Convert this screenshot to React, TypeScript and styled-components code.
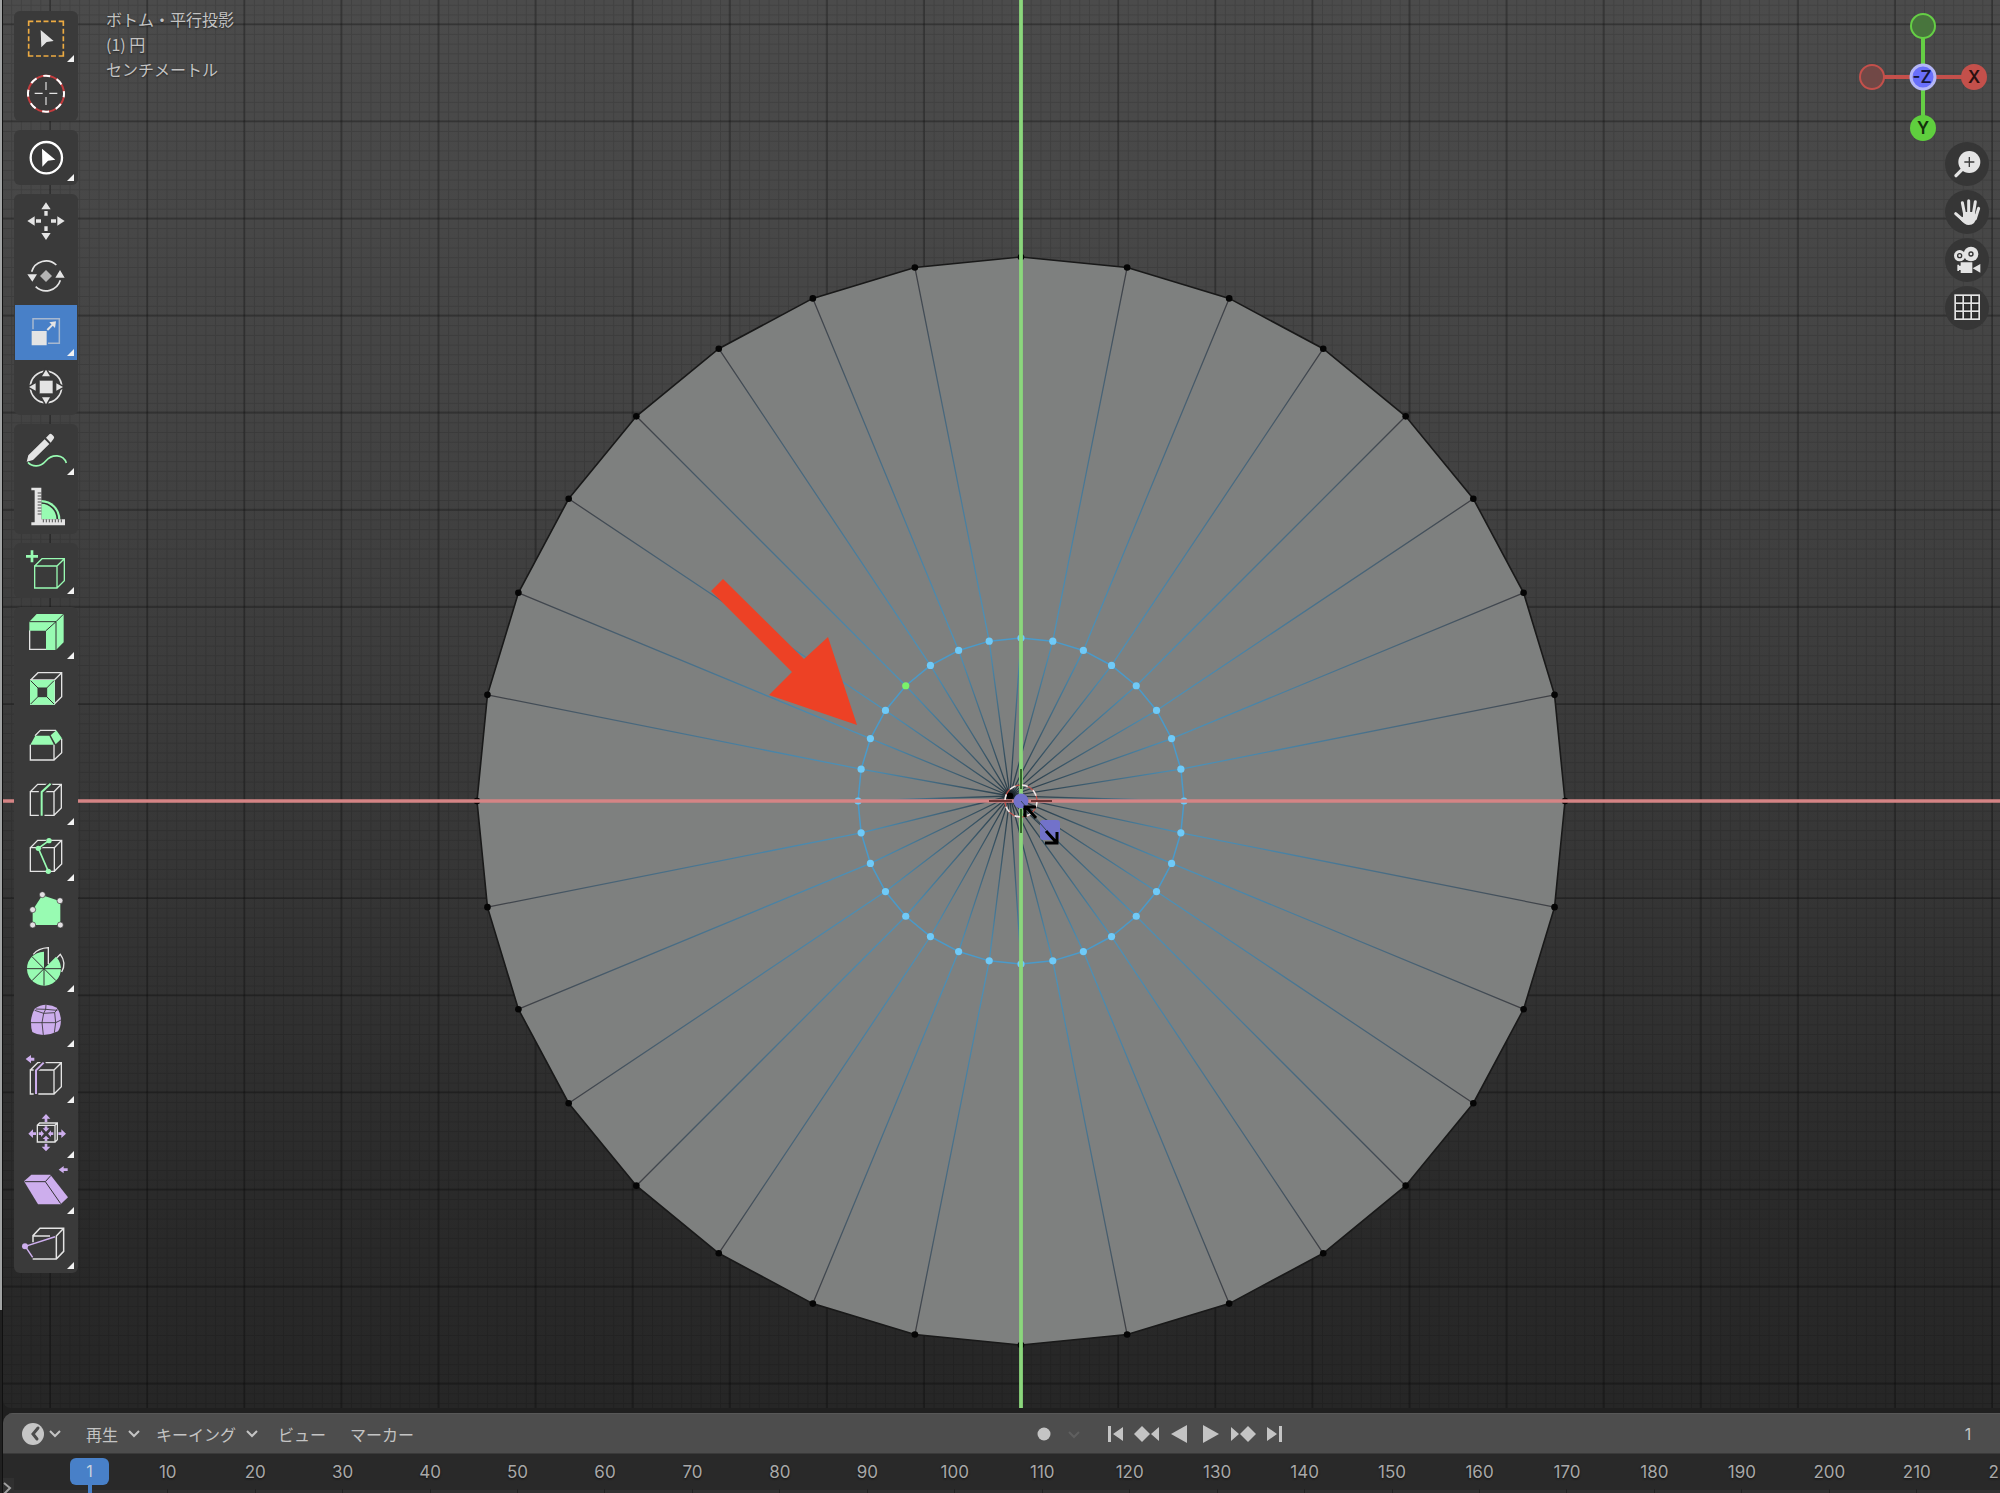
import React from "react";
import styled, { createGlobalStyle } from "styled-components";

const Global = createGlobalStyle`
  *, *::before, *::after { box-sizing: border-box; }
  html, body { margin: 0; background: #1f1f1f; }
  body { font-family: Inter, "Noto Sans CJK JP", sans-serif; color: #c4c4c4; }
  button { font: inherit; color: inherit; background: none; border: 0; padding: 0; margin: 0; }
`;

const Shell = styled.div`
  display: flex;
  height: 100vh;
  overflow: hidden;
`;

const Edge = styled.div`
  display: flex;
  flex-direction: column;
  width: 3px;
  padding-bottom: 183px;
  border-right: 1px solid #101010;
  background: #202020;
`;

const EdgeLight = styled.div`
  flex: 1;
  background: #a2a4a4;
`;

const Main = styled.main`
  flex: 1;
  min-width: 0;
  display: flex;
  flex-direction: column;
  gap: 5px;
`;

const Viewport = styled.section`
  position: relative;
  flex: 1;
  min-height: 0;
  display: flex;
  padding: 11px 11px 0;
  overflow: hidden;
  border-radius: 0 0 0 8px;
  background: linear-gradient(#4b4b4b, #444444 28%, #383838 57%, #2a2a2a 85%, #262626);
`;

const Scene = styled.svg`
  position: absolute;
  inset: 0;
  width: 100%;
  height: 100%;
`;

const Toolbar = styled.div`
  position: relative;
  display: flex;
  flex-direction: column;
  gap: 9px;
  width: 64px;
`;

const ToolGroup = styled.div<{ $height: number }>`
  display: flex;
  flex-direction: column;
  height: ${(p) => p.$height}px;
  border-radius: 6px;
  overflow: hidden;
  background: #3a3a3a;
`;

const ToolButton = styled.button<{ $active?: boolean; $menu?: boolean }>`
  position: relative;
  flex: 1;
  min-height: 0;
  display: flex;
  align-items: center;
  justify-content: center;
  margin: 0 1px;
  background: ${(p) => (p.$active ? "#4880c8" : "transparent")};
  svg { width: 44px; height: 44px; overflow: visible; }
  &::after {
    content: "";
    display: ${(p) => (p.$menu ? "block" : "none")};
    position: absolute;
    right: 3px;
    bottom: 4px;
    border-left: 7px solid transparent;
    border-bottom: 7px solid #f2f2f2;
  }
`;

const Info = styled.div`
  position: relative;
  flex: 1;
  margin: -4px 0 0 28px;
  font-family: "Noto Sans CJK JP", sans-serif;
  font-size: 16px;
  line-height: 25px;
  color: #c3c3c3;
  text-shadow: 0 1px 2px rgba(0, 0, 0, 0.5);
  p { margin: 0; }
`;

const Navigation = styled.div`
  position: relative;
  display: flex;
  flex-direction: column;
  align-items: flex-end;
  gap: 4px;
  padding-top: 1px;
`;

const Gizmo = styled.svg`
  width: 132px;
  height: 126px;
  overflow: visible;
  text { font: 600 17px Inter, sans-serif; text-anchor: middle; }
`;

const NavButton = styled.button`
  width: 44px;
  height: 44px;
  border-radius: 50%;
  background: #363636;
  svg { display: block; width: 44px; height: 44px; }
`;

const Timeline = styled.section`
  display: flex;
  flex-direction: column;
  border-radius: 10px 0 0 0;
  overflow: hidden;
  background: #292929;
`;

const TimelineBar = styled.header`
  display: grid;
  grid-template-columns: 13fr auto 9fr;
  align-items: center;
  height: 40px;
  background: #4d4d4d;
  border-top: 1px solid #575757;
  font-family: "Noto Sans CJK JP", sans-serif;
  font-size: 16px;
  line-height: 24px;
  svg { display: block; }
`;

const Menus = styled.nav`
  display: flex;
  align-items: center;
  padding-left: 19px;
  gap: 20px;
  min-width: 0;
`;

const MenuSet = styled.div<{ $gap: number }>`
  display: flex;
  gap: ${(p) => p.$gap}px;
`;

const MenuButton = styled.button`
  display: flex;
  align-items: center;
  gap: 10px;
  white-space: nowrap;
`;

const EditorButton = styled(MenuButton)`
  gap: 5px;
  margin-right: 5px;
`;

const Playback = styled.div`
  display: flex;
  align-items: center;
`;

const PlayButton = styled.button<{ $after?: number; $dim?: boolean }>`
  width: 32px;
  height: 32px;
  margin-right: ${(p) => p.$after ?? 0}px;
  color: ${(p) => (p.$dim ? "#5f5f5f" : "#c4c4c4")};
  svg { width: 32px; height: 32px; }
`;

const FrameField = styled.input`
  justify-self: end;
  width: 40px;
  margin-right: 12px;
  padding: 0;
  border: 0;
  outline: 0;
  background: none;
  color: #c4c4c4;
  font: 16px/24px Inter, sans-serif;
  text-align: center;
`;

const Ruler = styled.div`
  display: flex;
  height: 40px;
  border-top: 1px solid #3a3a3a;
  background: linear-gradient(#292929 36px, #313131 36px);
  overflow: hidden;
`;

const RulerStart = styled.div`
  flex: 0 0 121px;
  display: flex;
`;

const Expand = styled.button`
  width: 11px;
  height: 16px;
  margin-top: 24px;
  background: #303030;
  svg { display: block; }
`;

const Playhead = styled.div`
  display: flex;
  flex-direction: column;
  align-items: center;
  margin: 4px 0 0 56px;
  &::after { content: ""; flex: 1; width: 4px; background: #4880c8; }
`;

const PlayheadFrame = styled.output`
  width: 39px;
  height: 27px;
  border-radius: 6px;
  background: #4880c8;
  color: #c8d2de;
  font-size: 16px;
  line-height: 27px;
  text-align: center;
`;

const Frames = styled.ol`
  flex: 1;
  display: grid;
  grid-template-columns: repeat(22, 1fr);
  margin: 0 -48px 0 0;
  padding: 0;
  list-style: none;
  font-size: 17px;
  line-height: 36px;
  color: #a8a8a8;
  text-align: center;
  text-shadow: 0 1px 2px #111;
`;

const Frame = styled.li`
  background: linear-gradient(#222, #222) 50% 100% / 1px 4px no-repeat;
`;

const G = "#98fbb2";
const W = "#e4e4e4";
const P = "#cdaeed";
const D = "#333333";
const BG = "#3a3a3a";

/* Wire cube with its front face at (x, y) and a depth up and to the right. */
const Cube = ({ x, y, w, h, d = 22, c = W }: { x: number; y: number; w: number; h: number; d?: number; c?: string }) => (
  <path
    d={`M${x} ${y}h${w}v${h}h${-w}zl${d} ${-d}h${w}v${h}l${-d} ${d}M${x + w} ${y}l${d} ${-d}`}
    fill="none"
    stroke={c}
    strokeWidth="4"
  />
);

type Tool = { name: string; cy: number; menu?: boolean; active?: boolean; art: React.ReactNode };

const groups: { height: number; tools: Tool[] }[] = [
  {
    height: 110,
    tools: [
      {
        name: "ボックス選択", cy: 115, menu: true,
        art: (
          <>
            <path d="M86 76V62H100M176 62H190V76M190 152V166H176M100 166H86V152" fill="none" stroke="#edab42" strokeWidth="5" />
            <path d="M108 62H168M108 166H168M86 84V144M190 84V144" fill="none" stroke="#edab42" strokeWidth="5" strokeDasharray="15 7.5" />
            <path d="M122 88L161 121L140 124L124 140z" fill={W} />
          </>
        ),
      },
      {
        name: "カーソル", cy: 280,
        art: (
          <g fill="none">
            <circle cx="138" cy="279" r="54" stroke="#c23c3e" strokeWidth="6" />
            <circle cx="138" cy="279" r="54" stroke="#fff" strokeWidth="6" strokeDasharray="21.2 21.2" strokeDashoffset="10" />
            <path d="M138 244v24M138 289v24M104 278h24M148 278h24" stroke={W} strokeWidth="3.5" />
          </g>
        ),
      },
    ],
  },
  {
    height: 55,
    tools: [
      {
        name: "選択", cy: 472, menu: true,
        art: (
          <>
            <circle cx="139" cy="471" r="47" fill="none" stroke="#fff" strokeWidth="7" />
            <path d="M126 444L166 477L144 480L127 498z" fill="#fff" />
          </>
        ),
      },
    ],
  },
  {
    height: 221,
    tools: [
      {
        name: "移動", cy: 665,
        art: <path fill={W} d="M138 606l14 21h-28zM133 632h10v14h-10zM138 719l14-21h-28zM133 678h10v14h-10zM82 662l22-14v28zM108 657h15v10h-15zM194 662l-22-14v28zM153 657h15v10h-15z" />,
      },
      {
        name: "回転", cy: 830,
        art: (
          <>
            <path d="M138 809l18 18l-18 18l-18-18z" fill="#b4b4b4" />
            <path d="M95 814A45 45 0 0 1 169 794M107 859A45 45 0 0 0 181 840" fill="none" stroke={W} strokeWidth="5" />
            <path d="M82 822h29l-14 22zM180 809l14 23h-28z" fill={W} />
          </>
        ),
      },
      {
        name: "スケール", cy: 996, menu: true, active: true,
        art: (
          <>
            <path d="M99 988V956H178V1030H144" fill="none" stroke="#a7b8cf" strokeWidth="4.5" />
            <path d="M95 993h45v43h-45z" fill={W} />
            <path d="M142 990L158 974" stroke={W} strokeWidth="6" />
            <path d="M168 964l-20 3l17 17z" fill={W} />
          </>
        ),
      },
      {
        name: "トランスフォーム", cy: 1160,
        art: (
          <>
            <circle cx="138" cy="1160" r="47" fill="none" stroke={W} strokeWidth="5" />
            <path d="M138 1108l12 20h-24zM138 1212l12-21h-24zM87 1160l20-11v22zM189 1160l-20-11v22z" fill={W} stroke={BG} strokeWidth="9" paintOrder="stroke" />
            <path d="M118 1140h41v40h-41z" fill={W} stroke={D} strokeWidth="2" />
          </>
        ),
      },
    ],
  },
  {
    height: 110,
    tools: [
      {
        name: "アノテート", cy: 155, menu: true,
        art: (
          <>
            <path d="M84 186C98 201 121 201 138 181C155 161 190 160 199 188" fill="none" stroke={G} strokeWidth="5" />
            <path d="M80 184L85 165L134 117L148 131L99 179zM138 112L149 101Q152 99 155 102L161 108Q164 112 161 115L152 127z" fill={W} />
          </>
        ),
      },
      {
        name: "メジャー", cy: 320,
        art: (
          <>
            <path d="M124 299A58 58 0 0 1 181 357H124z" fill={G} />
            <path d="M124 308A49 49 0 0 1 172 357" fill="none" stroke={D} strokeWidth="5" />
            <path d="M94 262H124V357H195V375H94V366H104V270H94z" fill={W} />
            <path d="M113 278h11M113 287h11M113 296h11M113 305h11M113 314h11M113 323h11M113 332h11M113 341h11M130 357v9M139 357v9M148 357v9M157 357v9M166 357v9M175 357v9M184 357v9" stroke={D} strokeWidth="2.5" />
          </>
        ),
      },
    ],
  },
  {
    height: 55,
    tools: [
      {
        name: "立方体を追加", cy: 512, menu: true,
        art: (
          <>
            <path d="M96 450v36M78 468h36" stroke={G} strokeWidth="8" />
            <Cube x={104} y={497} w={67} h={66} c={G} />
          </>
        ),
      },
    ],
  },
  {
    height: 666,
    tools: [
      {
        name: "押し出し", cy: 704, menu: true,
        art: (
          <>
            <path d="M89 690V747H139" fill="none" stroke={W} strokeWidth="4" />
            <path d="M88 664L110 641H191V726L168 749H138V691H88z" fill={G} />
            <path d="M88 664H168L191 641M168 664V749M138 691L168 664" fill="none" stroke={D} strokeWidth="3" />
          </>
        ),
      },
      {
        name: "面を差し込む", cy: 870,
        art: (
          <>
            <Cube x={92} y={840} w={71} h={72} />
            <path d="M90 840h74v74h-74z" fill={G} />
            <path d="M92 842L162 912M162 842L92 912" stroke={D} strokeWidth="3" />
            <path d="M114 864h26v26h-26z" fill={BG} stroke={D} strokeWidth="3" />
          </>
        ),
      },
      {
        name: "ベベル", cy: 1036,
        art: (
          <>
            <path d="M91 1032V1078H162V1032M162 1078L185 1056V1014M105 1005L121 989H168" fill="none" stroke={W} strokeWidth="4" />
            <path d="M91 1032L106 1005H148L162 1032zM152 1004L169 989L186 1013L167 1031z" fill={G} />
          </>
        ),
      },
      {
        name: "ループカット", cy: 1203, menu: true,
        art: (
          <>
            <Cube x={91} y={1175} w={71} h={71} />
            <path d="M154 1150L125 1176V1250" fill="none" stroke={BG} strokeWidth="17" />
            <path d="M152 1151L125 1176V1247" fill="none" stroke={G} strokeWidth="6" />
          </>
        ),
      },
      {
        name: "ナイフ", cy: 79, menu: true,
        art: (
          <>
            <Cube x={91} y={51} w={72} h={71} />
            <path d="M147 30L115 53L145 122" fill="none" stroke={BG} strokeWidth="10" />
            <path d="M147 30L115 53L145 122" fill="none" stroke={G} strokeWidth="5" />
            <g fill={G}><circle cx="147" cy="30" r="8" /><circle cx="115" cy="53" r="8" /><circle cx="145" cy="122" r="8" /></g>
          </>
        ),
      },
      {
        name: "ポリビルド", cy: 246,
        art: (
          <>
            <path d="M98 240L127 196L181 214V285H98z" fill={G} />
            <g fill="#e2dfe2" stroke={D} strokeWidth="2">
              <circle cx="127" cy="194" r="9" /><circle cx="180" cy="212" r="9" /><circle cx="98" cy="239" r="9" /><circle cx="98" cy="285" r="9" /><circle cx="181" cy="285" r="9" />
            </g>
          </>
        ),
      },
      {
        name: "スピン", cy: 412, menu: true,
        art: (
          <>
            <path d="M100 371C110 358 127 352 145 351V400M170 382L181 371C194 388 195 406 185 424" fill="none" stroke={W} strokeWidth="4" />
            <path d="M132 414V363A51 51 0 1 0 168 378z" fill={G} />
            <path d="M81 414H183M132 414V465M132 414L96 378M132 414L96 450M132 414L168 450" stroke={D} strokeWidth="3" />
          </>
        ),
      },
      {
        name: "スムーズ", cy: 578, menu: true,
        art: (
          <>
            <path d="M104 535Q120 523 138 523Q158 524 172 533Q182 550 183 570Q182 592 174 603Q152 614 130 614Q108 612 97 605Q92 590 93 570Q96 548 104 535z" fill={P} />
            <path d="M93 577H167L183 569M138 523L137 537L131 549L126 577L130 614M104 540L131 549L164 547L174 533M107 536L137 537L172 540M164 547L167 577L163 607" fill="none" stroke={D} strokeWidth="2.5" />
          </>
        ),
      },
      {
        name: "辺スライド", cy: 745, menu: true,
        art: (
          <>
            <Cube x={91} y={718} w={71} h={72} />
            <path d="M134 693L108 718V794" fill="none" stroke={BG} strokeWidth="14" />
            <path d="M131 696L108 719V790" fill="none" stroke={P} strokeWidth="6" />
            <path d="M77 685L93 673V681H103V690H93V698z" fill={P} />
          </>
        ),
      },
      {
        name: "収縮 / 膨張", cy: 911, menu: true,
        art: (
          <>
            <Cube x={112} y={885} w={53} h={50} d={7} />
            <path fill={P} d="M138 851l13 14h-9v10h-8v-10h-9zM138 963l13-14h-9v-9h-8v9h-9zM85 910l14-13v9h9v8h-9v9zM198 910l-14-13v9h-9v8h9v9zM138 904l-10-10h6v-6h8v6h6zM138 916l-10 10h6v6h8v-6h6zM132 910l-9-10v6h-7v8h7v6zM144 910l9-10v6h7v8h-7v6z" />
          </>
        ),
      },
      {
        name: "せん断", cy: 1078, menu: true,
        art: (
          <>
            <path d="M72 1052L94 1032H151L204 1100L182 1121H114z" fill={P} />
            <path d="M74 1053H136L153 1034M136 1053L182 1119" fill="none" stroke={D} strokeWidth="3" />
            <path d="M176 1017L191 1006V1013H203V1021H191V1028z" fill={P} />
          </>
        ),
      },
      {
        name: "リップ", cy: 1244, menu: true,
        art: (
          <>
            <path d="M99 1236V1216L120 1194H191V1263L169 1286H98M99 1217H150M169 1286V1217L191 1194" fill="none" stroke={W} strokeWidth="4.5" />
            <path d="M98 1281L76 1248L165 1219" fill="none" stroke={P} strokeWidth="4.5" />
            <circle cx="75" cy="1248" r="9" fill={P} />
          </>
        ),
      },
    ],
  },
];

const navIcons: { name: string; cy: number; art: React.ReactNode }[] = [
  {
    name: "ズーム", cy: 492,
    art: (
      <>
        <path d="M488 506L467 527" stroke={W} strokeWidth="10" strokeLinecap="round" />
        <circle cx="507" cy="486" r="33" fill={W} />
        <path d="M507 471v30M492 486h30" stroke="#3a3a3a" strokeWidth="4" />
      </>
    ),
  },
  {
    name: "視点の移動", cy: 636,
    art: (
      <>
        <path d="M486 608L494 648M505 602V645M525 605L518 648M535 625L525 656M466 641L488 660" stroke={W} strokeWidth="9" strokeLinecap="round" />
        <path d="M488 636H520L529 648Q526 675 505 675Q493 675 478 656L488 650z" fill={W} />
      </>
    ),
  },
  {
    name: "カメラ", cy: 780,
    art: (
      <>
        <path d="M481 787H516V819H481V810H476V813H471V794H476V797H481zM517 805L540 792V818z" fill={W} />
        <circle cx="478" cy="767" r="17" fill={W} />
        <circle cx="512" cy="762" r="22" fill={W} />
        <circle cx="478" cy="767" r="6" fill="none" stroke="#333" strokeWidth="4" />
        <circle cx="512" cy="762" r="6" fill="none" stroke="#333" strokeWidth="4" />
      </>
    ),
  },
  {
    name: "平行投影", cy: 924,
    art: (
      <>
        <path d="M462 883h77v77h-77z" fill={W} />
        {[468, 492, 516].map((x) => [889, 913, 937].map((y) => <rect key={`${x}-${y}`} x={x} y={y} width="17" height="17" fill="#303030" stroke="#161616" strokeWidth="2" />))}
      </>
    ),
  },
];

const CX = 1021;
const CY = 801;
const HUB = [1010, 796];
const UNIT = 97.1;
const ring = (r: number) =>
  Array.from({ length: 32 }, (_, i) => {
    const a = (i * Math.PI) / 16;
    return [CX + r * Math.cos(a), CY + r * Math.sin(a)];
  });
const outer = ring(544);
const inner = ring(163);
const pts = (list: number[][]) => list.map((p) => p.join(",")).join(" ");

function MeshScene() {
  return (
    <Scene viewBox="3 0 1997 1408" preserveAspectRatio="xMidYMid slice" aria-hidden="true">
      <defs>
        <pattern id="minor" x={CX} y={CY} width={UNIT / 10} height={UNIT / 10} patternUnits="userSpaceOnUse">
          <path d={`M0 0H${UNIT / 10}M0 0V${UNIT / 10}`} stroke="#000" strokeOpacity="0.12" strokeWidth="2" />
        </pattern>
        <radialGradient id="spoke" gradientUnits="userSpaceOnUse" cx={CX} cy={CY} r="544">
          <stop offset="0" stopColor="#26343d" />
          <stop offset="0.15" stopColor="#42657a" />
          <stop offset="0.3" stopColor="#4c93bb" />
          <stop offset="0.55" stopColor="#4a7d9c" />
          <stop offset="0.8" stopColor="#485f70" />
          <stop offset="1" stopColor="#3e3e42" />
        </radialGradient>
        <radialGradient id="hub">
          <stop offset="0" stopColor="#000" stopOpacity="0.7" />
          <stop offset="1" stopColor="#000" stopOpacity="0" />
        </radialGradient>
      </defs>
      <rect x="3" width="1997" height="1408" fill="url(#minor)" />
      <g stroke="#000" strokeOpacity="0.22" strokeWidth="2">
        {Array.from({ length: 21 }, (_, i) => CX + (i - 10) * UNIT).map((x) => <path key={x} d={`M${x} 0V1408`} />)}
        {Array.from({ length: 15 }, (_, i) => CY + (i - 8) * UNIT).map((y) => <path key={y} d={`M3 ${y}H2000`} />)}
      </g>

      <polygon points={pts(outer)} fill="#7e807f" stroke="#191919" strokeWidth="1.6" />
      <g stroke="url(#spoke)" strokeWidth="1.3">
        {inner.map((p, i) => (
          <path key={i} fill="none" d={`M${outer[i].join(" ")}L${p.join(" ")}L${HUB.join(" ")}`} />
        ))}
      </g>
      <polygon points={pts(inner)} fill="none" stroke="#4a9aca" strokeWidth="1.5" />
      {outer.map((p, i) => <circle key={i} cx={p[0]} cy={p[1]} r="3.3" fill="#050505" />)}
      {inner.map((p, i) => <circle key={i} cx={p[0]} cy={p[1]} r="3.6" fill={i === 20 ? "#79f26b" : "#6fcaf8"} />)}
      <circle cx={HUB[0]} cy={HUB[1]} r="9" fill="url(#hub)" />
      <circle cx={HUB[0]} cy={HUB[1]} r="3.3" />

      <path d={`M3 ${CY}H2000`} stroke="#d58485" strokeWidth="3.6" />
      <path d={`M${CX} 0V1408`} stroke="#8bd67c" strokeWidth="3.8" />

      <g fill="none">
        <circle cx={CX} cy={CY} r="16" stroke="#c9544b" strokeWidth="1.2" />
        <circle cx={CX} cy={CY} r="16" stroke="#ececec" strokeWidth="1.6" strokeDasharray="6.3 6.3" />
        <path d="M1021 769V789M1021 809V833" stroke="#35682c" strokeWidth="2" />
        <path d="M989 801H1012M1031 801H1052" stroke="#6c3535" strokeWidth="2" />
      </g>
      <circle cx={CX} cy={CY} r="7.5" fill="#7272ca" />
      <rect x="1040" y="820" width="20" height="20" rx="3" fill="#7272ca" />
      <path d="M1021 801L1046 830" stroke="#354959" strokeWidth="1" />
      <path d="M1036 818L1026 807M1036 807H1025V817M1046 831L1056 842M1057 832V843H1045" fill="none" stroke="#000" strokeWidth="3" />

      <path d="M723 579L804 659L828 637L857 725L769 695L792 672L711 591z" fill="#ed4125" />
    </Scene>
  );
}

const Chevron = () => (
  <svg width="12" height="8" viewBox="0 0 12 8" fill="none" stroke="currentColor" strokeWidth="2">
    <path d="M1 1L6 6L11 1" />
  </svg>
);

const playback = [
  { name: "先頭へ", d: "M9 8H12V24H9zM14 16L24 9V23z" },
  { name: "前のキーフレーム", d: "M3 16L11 8L19 16L11 24zM20 16L28 9V23z" },
  { name: "逆再生", d: "M8 16L24 7V25z" },
  { name: "再生", d: "M8 7L24 16L8 25z" },
  { name: "次のキーフレーム", d: "M4 9L12 16L4 23zM13 16L21 8L29 16L21 24z" },
  { name: "末尾へ", d: "M8 9L18 16L8 23zM20 8H23V24H20z" },
];

export default function App() {
  return (
    <Shell>
      <Global />
      <Edge><EdgeLight /></Edge>
      <Main>
        <Viewport>
          <MeshScene />
          <Toolbar role="toolbar" aria-label="ツール">
            {groups.map((g, i) => (
              <ToolGroup key={i} $height={g.height}>
                {g.tools.map((t) => (
                  <ToolButton key={t.name} type="button" aria-label={t.name} aria-pressed={!!t.active} $active={t.active} $menu={t.menu}>
                    <svg viewBox={`72 ${t.cy - 66} 132 132`}>{t.art}</svg>
                  </ToolButton>
                ))}
              </ToolGroup>
            ))}
          </Toolbar>
          <Info>
            <p>ボトム・平行投影</p>
            <p>(1) 円</p>
            <p>センチメートル</p>
          </Info>
          <Navigation>
            <Gizmo viewBox="1857 12 132 126">
              <path d="M1923 26V128" stroke="#65cf45" strokeWidth="4" />
              <path d="M1872 77H1974" stroke="#c4504b" strokeWidth="4" />
              <circle cx="1923" cy="26" r="12" fill="#48753d" stroke="#65cf45" strokeWidth="2" />
              <circle cx="1872" cy="77" r="12" fill="#714846" stroke="#c4504b" strokeWidth="2" />
              <circle cx="1974" cy="77" r="13" fill="#c4504b" />
              <circle cx="1923" cy="128" r="13" fill="#5fcf3e" />
              <circle cx="1923" cy="77" r="12" fill="#696ffa" stroke="#b4b6f6" strokeWidth="3" />
              <text x="1974" y="83" fill="#2b1010">X</text>
              <text x="1923" y="134" fill="#14300d">Y</text>
              <text x="1922" y="83" fill="#16173a">-Z</text>
            </Gizmo>
            {navIcons.map((n) => (
              <NavButton key={n.name} type="button" aria-label={n.name}>
                <svg viewBox={`434 ${n.cy - 66} 132 132`}>{n.art}</svg>
              </NavButton>
            ))}
          </Navigation>
        </Viewport>
        <Timeline>
          <TimelineBar>
            <Menus>
              <EditorButton type="button" aria-label="エディタータイプ">
                <svg width="22" height="22" viewBox="0 0 22 22">
                  <circle cx="11" cy="11" r="11" fill="#c6c6c6" />
                  <path d="M16 5L11 11L15 16" fill="none" stroke="#4d4d4d" strokeWidth="3" strokeLinecap="round" />
                </svg>
                <Chevron />
              </EditorButton>
              <MenuSet $gap={16}>
                <MenuButton type="button">再生<Chevron /></MenuButton>
                <MenuButton type="button">キーイング<Chevron /></MenuButton>
              </MenuSet>
              <MenuSet $gap={24}>
                <MenuButton type="button">ビュー</MenuButton>
                <MenuButton type="button">マーカー</MenuButton>
              </MenuSet>
            </Menus>
            <Playback>
              <PlayButton type="button" aria-label="自動キー挿入">
                <svg viewBox="0 0 32 32" fill="currentColor"><circle cx="16" cy="16" r="6.5" /></svg>
              </PlayButton>
              <PlayButton type="button" aria-label="自動キー設定" $dim $after={7}>
                <svg viewBox="0 0 32 32" fill="none" stroke="currentColor" strokeWidth="2"><path d="M9 14L14 19L19 14" /></svg>
              </PlayButton>
              {playback.map((b) => (
                <PlayButton key={b.name} type="button" aria-label={b.name}>
                  <svg viewBox="0 0 32 32" fill="currentColor"><path d={b.d} /></svg>
                </PlayButton>
              ))}
            </Playback>
            <FrameField aria-label="現在のフレーム" defaultValue="1" />
          </TimelineBar>
          <Ruler>
            <RulerStart>
              <Expand type="button" aria-label="チャンネルを表示">
                <svg width="11" height="16" viewBox="0 0 11 16" fill="none" stroke="#a0a0a0" strokeWidth="2"><path d="M1 5L7 10L1 16" /></svg>
              </Expand>
              <Playhead><PlayheadFrame>1</PlayheadFrame></Playhead>
            </RulerStart>
            <Frames>
              {Array.from({ length: 22 }, (_, i) => <Frame key={i}>{(i + 1) * 10}</Frame>)}
            </Frames>
          </Ruler>
        </Timeline>
      </Main>
    </Shell>
  );
}
